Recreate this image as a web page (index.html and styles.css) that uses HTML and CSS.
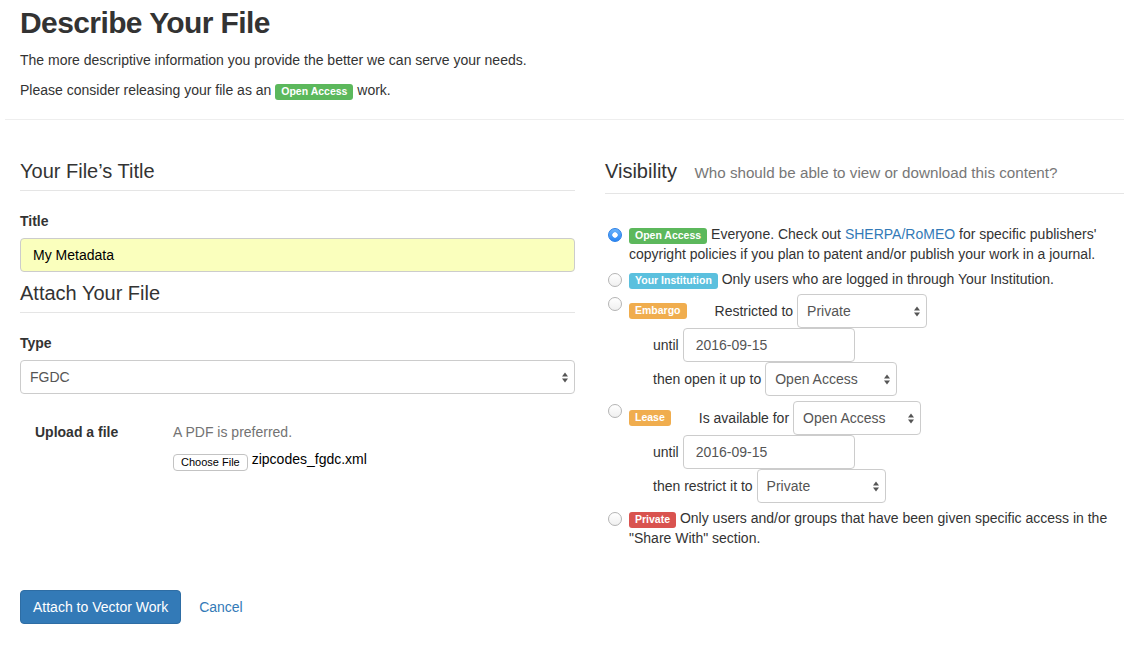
FILE: index.html
```html
<!DOCTYPE html>
<html lang="en">
<head>
<meta charset="utf-8">
<title>Describe Your File</title>
<link rel="stylesheet" href="styles.css">
</head>
<body>
<div class="page">
  <header class="intro">
    <h1 class="intro-title">Describe Your File</h1>
    <p class="intro-text">The more descriptive information you provide the better we can serve your needs.</p>
    <p class="intro-text">Please consider releasing your file as an <span class="badge badge-green">Open Access</span> work.</p>
  </header>
  <hr class="rule">
  <div class="columns">
    <div class="col-left">
      <h3 class="legend">Your File’s Title</h3>
      <label class="field-label" for="title">Title</label>
      <input class="field field-full autofill" id="title" type="text" value="My Metadata">
      <h3 class="legend legend-attach">Attach Your File</h3>
      <label class="field-label" for="type">Type</label>
      <div class="select-wrap field-full">
        <select id="type"><option>FGDC</option></select>
        <svg class="arrows" width="6" height="11" viewBox="0 0 6 11"><path d="M0 4.5 L3 0.5 L6 4.5 Z M0 6.5 L3 10.5 L6 6.5 Z" fill="#555"/></svg>
      </div>
      <div class="upload">
        <div class="upload-label">Upload a file</div>
        <div class="upload-body">
          <p class="help">A PDF is preferred.</p>
          <div class="file-row">
            <button class="file-btn" type="button">Choose File</button>
            <span class="file-name">zipcodes_fgdc.xml</span>
          </div>
        </div>
      </div>
      <div class="actions">
        <button class="btn-primary" type="button">Attach to Vector Work</button>
        <a class="link" href="#">Cancel</a>
      </div>
    </div>

    <div class="col-right">
      <h3 class="legend legend-vis">Visibility <small>Who should be able to view or download this content?</small></h3>
      <div class="options">
        <div class="option">
          <input class="radio" type="radio" name="vis" checked>
          <div class="option-body"><span class="badge badge-green">Open Access</span> Everyone. Check out <a class="link" href="#">SHERPA/RoMEO</a> for specific publishers' copyright policies if you plan to patent and/or publish your work in a journal.</div>
        </div>
        <div class="option">
          <input class="radio" type="radio" name="vis">
          <div class="option-body"><span class="badge badge-blue">Your Institution</span> Only users who are logged in through Your Institution.</div>
        </div>
        <div class="option option-ctl">
          <input class="radio" type="radio" name="vis">
          <div class="option-body">
            <div class="ctl-row">
              <span class="badge badge-orange">Embargo</span>
              <span class="ctl-lead">Restricted to</span>
              <div class="select-wrap w130">
                <select><option>Private</option></select>
                <svg class="arrows" width="6" height="11" viewBox="0 0 6 11"><path d="M0 4.5 L3 0.5 L6 4.5 Z M0 6.5 L3 10.5 L6 6.5 Z" fill="#555"/></svg>
              </div>
            </div>
            <div class="ctl-row sub">
              <span>until</span>
              <input class="field date" type="text" value="2016-09-15">
            </div>
            <div class="ctl-row sub">
              <span>then open it up to</span>
              <div class="select-wrap w132">
                <select><option>Open Access</option></select>
                <svg class="arrows" width="6" height="11" viewBox="0 0 6 11"><path d="M0 4.5 L3 0.5 L6 4.5 Z M0 6.5 L3 10.5 L6 6.5 Z" fill="#555"/></svg>
              </div>
            </div>
          </div>
        </div>
        <div class="option option-ctl">
          <input class="radio" type="radio" name="vis">
          <div class="option-body">
            <div class="ctl-row">
              <span class="badge badge-orange">Lease</span>
              <span class="ctl-lead">Is available for</span>
              <div class="select-wrap w128">
                <select><option>Open Access</option></select>
                <svg class="arrows" width="6" height="11" viewBox="0 0 6 11"><path d="M0 4.5 L3 0.5 L6 4.5 Z M0 6.5 L3 10.5 L6 6.5 Z" fill="#555"/></svg>
              </div>
            </div>
            <div class="ctl-row sub">
              <span>until</span>
              <input class="field date" type="text" value="2016-09-15">
            </div>
            <div class="ctl-row sub">
              <span>then restrict it to</span>
              <div class="select-wrap w129">
                <select><option>Private</option></select>
                <svg class="arrows" width="6" height="11" viewBox="0 0 6 11"><path d="M0 4.5 L3 0.5 L6 4.5 Z M0 6.5 L3 10.5 L6 6.5 Z" fill="#555"/></svg>
              </div>
            </div>
          </div>
        </div>
        <div class="option">
          <input class="radio" type="radio" name="vis">
          <div class="option-body"><span class="badge badge-red">Private</span> Only users and/or groups that have been given specific access in the "Share With" section.</div>
        </div>
      </div>
    </div>
  </div>
</div>
</body>
</html>
```

FILE: styles.css
```css
* { box-sizing: border-box; }
html, body { margin: 0; background: #fff; }
body {
  font-family: "Liberation Sans", Arial, Helvetica, sans-serif;
  font-size: 14px;
  line-height: 20px;
  color: #333;
}
.page { padding-left: 5px; }

.intro { padding: 6px 15px 0; }
.intro-title {
  margin: 0;
  font-size: 30px;
  line-height: 33px;
  font-weight: bold;
  letter-spacing: -0.6px;
}
.intro-text { margin: 11px 0 0; }
.intro-text + .intro-text { margin-top: 10px; }
.rule { margin: 19px 0 0; border: 0; border-top: 1px solid #eee; height: 0; }

.badge {
  display: inline-block;
  padding: 2px 6px 3px;
  font-size: 10.5px;
  line-height: 11px;
  font-weight: bold;
  color: #fff;
  border-radius: 3px;
  white-space: nowrap;
  vertical-align: baseline;
}
.badge-green { background: #5cb85c; }
.badge-blue { background: #5bc0de; }
.badge-orange { background: #f0ad4e; }
.badge-red { background: #d9534f; }

.columns { display: flex; }
.col-left { width: 585px; flex: none; padding: 0 15px; }
.col-right { flex: 1; min-width: 0; padding-left: 15px; }

.legend {
  margin: 40px 0 0;
  padding-bottom: 8px;
  border-bottom: 1px solid #e5e5e5;
  font-size: 20px;
  line-height: 22px;
  font-weight: normal;
  color: #333;
}
.legend-attach { margin-top: 10px; padding-bottom: 8px; }
.legend-vis { padding-bottom: 9px; }
.legend-vis small { font-size: 15.2px; color: #777; margin-left: 12px; }

.field-label { display: block; font-weight: bold; margin: 20px 0 7px; }
.field {
  height: 34px;
  padding: 6px 12px;
  border: 1px solid #ccc;
  border-radius: 4px;
  background: #fff;
  font: inherit;
  color: #555;
  outline: none;
}
.field-full { width: 100%; }
.autofill { background: #faffbd; color: #000; }

.select-wrap {
  display: flex;
  align-items: center;
  height: 34px;
  border: 1px solid #ccc;
  border-radius: 4px;
  background: #fff;
  padding-right: 6px;
  flex: none;
}
.select-wrap select {
  appearance: none;
  -webkit-appearance: none;
  flex: 1;
  min-width: 0;
  height: 100%;
  border: 0;
  background: transparent;
  font: inherit;
  color: #555;
  padding: 0 0 0 9px;
  outline: none;
}
.arrows { flex: none; display: block; }
.w128 { width: 128px; }
.w129 { width: 129px; }
.w130 { width: 130px; }
.w132 { width: 132px; }

.upload { display: flex; margin-top: 28px; }
.upload-label { width: 153px; flex: none; padding-left: 15px; font-weight: bold; }
.help { margin: 0 0 7px; color: #737373; }
.file-row { display: flex; align-items: flex-start; gap: 4px; }
.file-btn {
  margin-top: 5px;
  height: 17px;
  padding: 0 7px;
  border: 1px solid #c3c3c3;
  border-radius: 4px;
  background: #fff;
  font-family: "Liberation Sans", Arial, sans-serif;
  font-size: 11px;
  line-height: 15px;
  color: #000;
}
.file-name { line-height: 16px; margin-top: 2px; color: #000; }

.actions { display: flex; align-items: center; gap: 18px; margin-top: 119px; }
.btn-primary {
  height: 34px;
  padding: 6px 12px;
  border: 1px solid #2e6da4;
  border-radius: 4px;
  background: #337ab7;
  color: #fff;
  font: inherit;
}
.link { color: #337ab7; text-decoration: none; }

.options { margin-top: 30px; }
.option { display: flex; margin-top: 5px; }
.options .option:first-child { margin-top: 0; }
.radio {
  appearance: none;
  -webkit-appearance: none;
  flex: none;
  width: 14px;
  height: 14px;
  margin: 4px 7px 0 3px;
  border: 1px solid #b4b4b4;
  border-radius: 50%;
  background: linear-gradient(#fff, #f0f0f0);
}
.radio:checked {
  border-color: #2a7fe6;
  background: radial-gradient(circle, #fff 0 2.4px, transparent 3px), linear-gradient(#6cb3fa, #2a86f4);
}
.option-ctl .radio { margin-top: 3px; }
.option-body { flex: 1; min-width: 0; }

.ctl-row { display: flex; align-items: center; height: 34px; gap: 4px; }
.ctl-row.sub { padding-left: 24px; }
.ctl-lead { margin-left: 24px; }
.date { width: 172px; color: #555; }
```
